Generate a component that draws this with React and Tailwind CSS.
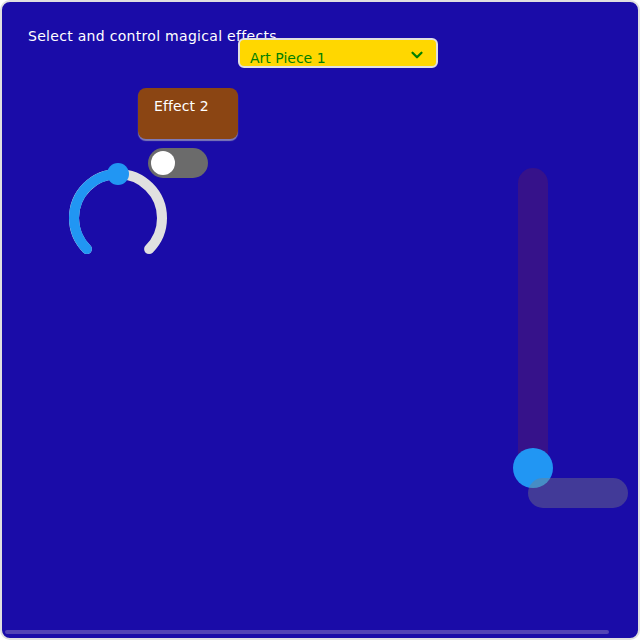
import React from "react";
import { ChevronDown } from "lucide-react";

function Dial() {
  return (
    <svg width="100" height="100" viewBox="0 0 100 100" className="block">
      <path d="M 18.9 86.1 A 44 44 0 1 1 81.1 86.1" fill="none" stroke="#e0e0e0" strokeWidth="10" strokeLinecap="round" />
      <path d="M 18.9 86.1 A 44 44 0 0 1 50 11" fill="none" stroke="#2196f3" strokeWidth="10" strokeLinecap="round" />
      <circle cx="50" cy="11" r="11" fill="#2196f3" />
    </svg>
  );
}

export default function App() {
  return (
    <div className="w-[640px] h-[640px] bg-[#1a0ca8] border-2 border-[#e0e0e0] rounded-[10px] relative overflow-hidden flex flex-col text-[14px] [font-family:'DejaVu_Sans',sans-serif]">
      <p className="ml-[26px] mt-[24px] leading-[20px] text-white tracking-[0.3px]">Select and control magical effects</p>
      <div className="ml-[236px] mt-[-8px] w-[200px] h-[30px] bg-[#ffd700] border-2 border-[#e0e0e0] rounded-[6px] flex items-center justify-between pl-[10px] pr-[10px] text-[#008000]">
        <span className="leading-[20px] mt-[9px] tracking-[0px]">Art Piece 1</span>
        <ChevronDown size={18} strokeWidth={3} color="#008000" className="mt-[4px]" />
      </div>
      <div className="ml-[136px] mt-[20px] w-[100px] h-[51px] bg-[#8b4513] rounded-[8px] shadow-[0_2px_1px_rgba(170,170,190,0.7)] px-[16px] pt-[8px] text-white leading-[20px] tracking-[0.1px]">
        Effect 2
      </div>
      <div className="ml-[146px] mt-[9px] w-[60px] h-[30px] rounded-full bg-[#6b6b6b] flex items-center pl-[3px]">
        <div className="w-[24px] h-[24px] rounded-full bg-white" />
      </div>
      <div className="ml-[66px] mt-[-15px]">
        <Dial />
      </div>
      <div className="mt-auto mb-[4px] ml-[3px] w-[604px] h-[4px] rounded-full bg-[#5243b6]" />

      <div className="absolute left-[516px] top-[166px] w-[110px] h-[340px]">
        <div className="absolute left-0 top-0 w-[30px] h-[300px] rounded-full bg-[#36128a]" />
        <div className="absolute left-[-5px] top-[280px] w-[40px] h-[40px] rounded-full bg-[#2196f3]" />
        <div className="absolute left-[10px] top-[310px] w-[100px] h-[30px] rounded-full bg-[rgba(128,128,128,0.4)]" />
      </div>
    </div>
  );
}
